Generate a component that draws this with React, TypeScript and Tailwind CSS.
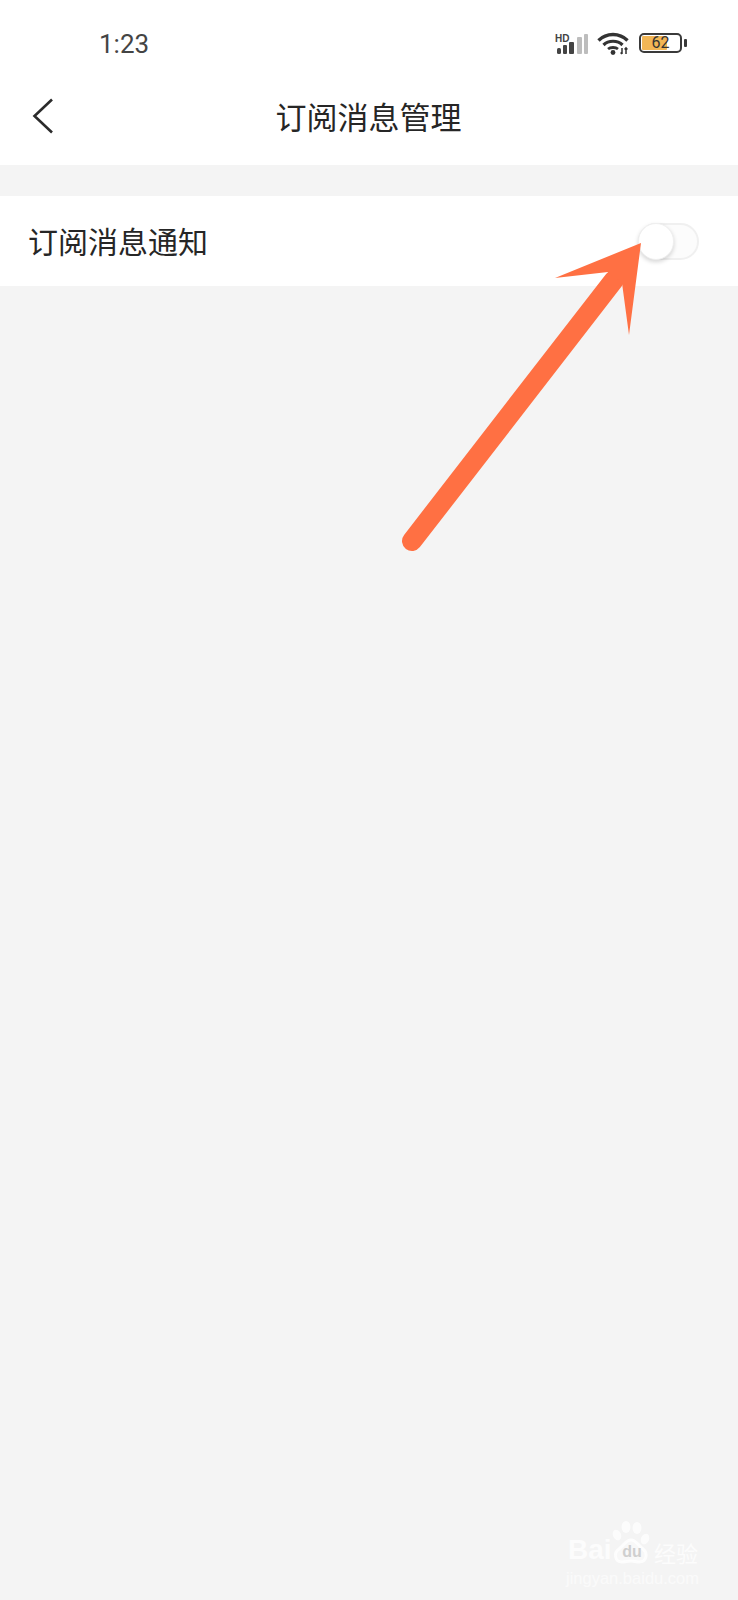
export default function App() {
  return (
    <div
      className="relative w-[738px] h-[1600px] overflow-hidden bg-[#f4f4f4] text-[#262626]"
      style={{ fontFamily: '"Noto Sans CJK SC", "Noto Sans", sans-serif' }}
    >
      <div className="bg-white pb-[4px]">
        <StatusBar />
        <div className="relative flex h-[91px] items-center justify-center pr-[1px]">
          <svg className="absolute left-[32px] top-[27px]" width="22" height="38" viewBox="0 0 22 38" fill="none">
            <path d="M20 2.5 L2.5 19 L20 35.5" stroke="#2b2b2b" strokeWidth="2.6" />
          </svg>
          <span className="text-[31px] leading-none">订阅消息管理</span>
        </div>
      </div>

      <div className="mt-[31px] flex h-[90px] items-center justify-between bg-white pl-[28px] pr-[39px]">
        <span className="mt-[-2px] text-[30px] leading-none">订阅消息通知</span>
        <div className="relative h-[37px] w-[61px] rounded-full border-2 border-[#f0f0f0] bg-[#fcfcfc]">
          <div className="absolute left-[-2px] top-[-2px] h-[37px] w-[36px] rounded-full border border-[#efefef] bg-white shadow-[0_2px_4px_rgba(0,0,0,0.16)]" />
        </div>
      </div>

      <svg className="absolute left-0 top-0" width="738" height="600" viewBox="0 0 738 600" fill="none">
        <path d="M412 541 L614 280" stroke="#ff7043" strokeWidth="20" strokeLinecap="round" />
        <path d="M641 243 L555 278 L608 272 L622 283 L629 335 Z" fill="#ff7043" />
      </svg>

      <Watermark />
    </div>
  );
}

function StatusBar() {
  return (
    <div className="flex h-[70px] items-start justify-between pl-[99px] pr-[51px] pt-[28px]">
      <span className="text-[26px] leading-[32px] text-[#444]" style={{ fontFamily: "Roboto, sans-serif" }}>
        1:23
      </span>
      <div className="flex items-start pt-[5px]">
        <div className="relative h-[21px] w-[33px]">
          <span
            className="absolute left-0 top-[1px] text-[10px] font-bold leading-[10px] text-[#444]"
            style={{ fontFamily: '"Liberation Sans", sans-serif' }}
          >
            HD
          </span>
          <svg className="absolute left-0 top-0" width="33" height="21" viewBox="0 0 33 21">
            <rect x="2" y="15" width="4" height="6" rx="1.5" fill="#444" />
            <rect x="8" y="12" width="4" height="9" rx="1" fill="#444" />
            <rect x="14" y="9" width="5" height="12" rx="1" fill="#444" />
            <rect x="22" y="4" width="5" height="17" rx="1" fill="#bdbdbd" />
            <rect x="29" y="1" width="4" height="20" rx="1" fill="#bdbdbd" />
          </svg>
        </div>
        <svg className="ml-[9px] mt-[-1px]" width="33" height="23" viewBox="0 0 33 23" fill="none">
          <path d="M1.5 8.5 C9.5 0.5 22.5 0.5 30.5 8.5" stroke="#333" strokeWidth="3.4" />
          <path d="M6.5 13 C11.5 8 20.5 8 25.5 13" stroke="#333" strokeWidth="3.2" />
          <path d="M11 17 C13.5 15 18.5 15 21 17" stroke="#333" strokeWidth="2.8" />
          <circle cx="16" cy="20.5" r="2.4" fill="#333" />
          <path d="M25 16 V22 M23.6 20.4 L25 22 M29 22 V16 M27.6 17.6 L29 16 L30.4 17.6" stroke="#333" strokeWidth="1.5" />
        </svg>
        <div className="ml-[9px] flex items-center gap-[2px]">
          <div className="relative h-[20px] w-[43px] rounded-[5px] border-2 border-[#3a3a3a] bg-white p-px">
            <div className="h-full w-[25px] rounded-[1px] bg-[#f2b655]" />
            <span
              className="absolute inset-0 flex items-center justify-center text-[16px] leading-none text-[#333]"
              style={{ fontFamily: "Roboto, sans-serif" }}
            >
              62
            </span>
          </div>
          <div className="h-[8px] w-[3px] rounded-[1px] bg-[#3a3a3a]" />
        </div>
      </div>
    </div>
  );
}

function Watermark() {
  return (
    <div className="absolute left-[566px] top-[1520px] w-[140px] text-white">
      <div className="flex items-end pl-[2px]">
        <span
          className="mb-[1px] w-[44px] text-[28px] font-bold leading-[30px] text-white/75"
          style={{ fontFamily: '"Liberation Sans", sans-serif' }}
        >
          Bai
        </span>
        <div className="relative h-[46px] w-[42px]">
          <svg width="42" height="46" viewBox="0 0 42 46" fill="#ffffff" fillOpacity="0.75">
            <ellipse cx="5" cy="15" rx="4" ry="5.5" transform="rotate(-25 5 15)" />
            <ellipse cx="14" cy="7" rx="4.5" ry="6" />
            <ellipse cx="25" cy="8" rx="4.5" ry="6" />
            <ellipse cx="33" cy="19" rx="4" ry="5.5" transform="rotate(25 33 19)" />
            <path
              d="M19 20 C24 20 26 25 31 29 C36 33 35 42 27 42 C24 42 22 41 19 41 C16 41 13 42 10 42 C3 42 1 33 7 29 C12 25 14 20 19 20 Z"
              fillOpacity="0.35"
              stroke="#ffffff"
              strokeOpacity="0.8"
              strokeWidth="3"
            />
          </svg>
          <span
            className="absolute bottom-[6px] left-[-1px] w-full text-center text-[16px] font-bold leading-none text-[#cfcfcf]"
            style={{ fontFamily: '"Liberation Sans", sans-serif' }}
          >
            du
          </span>
        </div>
        <span className="mb-[2px] whitespace-nowrap text-[22px] leading-[24px] text-white/75">经验</span>
      </div>
      <div
        className="mt-[2px] whitespace-nowrap text-[16.5px] leading-[20px] text-white/55"
        style={{ fontFamily: '"Liberation Sans", sans-serif' }}
      >
        jingyan.baidu.com
      </div>
    </div>
  );
}
